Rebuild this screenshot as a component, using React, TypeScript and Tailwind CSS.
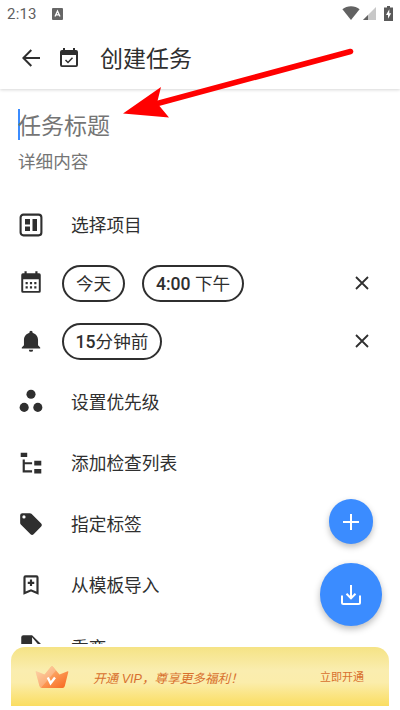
import type { ReactNode } from "react";

const Icon = ({
  children,
  className = "w-[26px] h-[26px]",
}: {
  children: ReactNode;
  className?: string;
}) => (
  <svg viewBox="0 0 24 24" fill="currentColor" className={`shrink-0 ${className}`}>
    {children}
  </svg>
);

const StatusBar = () => (
  <div className="flex items-center justify-between h-[28px] px-[7px] text-[#5f5f5f]">
    <div className="flex items-center gap-[15px]">
      <span className="pt-[1px] text-[15px] leading-none tracking-[0.2px]">2:13</span>
      <svg viewBox="0 0 11 12" className="w-[11px] h-[12px] mb-[1px]">
        <rect width="11" height="12" rx="1" fill="#666" />
        <path d="M3 8.5L5.5 3L8 8.5M4 6.8h3" fill="none" stroke="#fff" strokeWidth="1.3" />
      </svg>
    </div>
    <div className="flex items-center pb-[2px]">
      <svg viewBox="0 0 18 14" className="w-[18px] h-[14px]" fill="#626262">
        <path d="M9 14L0.4 3.2C5 -0.9 13 -0.9 17.6 3.2Z" />
      </svg>
      <svg viewBox="0 0 13 13" className="w-[13px] h-[13px] ml-[3px]">
        <path d="M13 0V13H0Z" fill="#c8c8c8" />
        <path d="M5 8V13H0Z" fill="#626262" />
      </svg>
      <svg viewBox="0 0 9 15" className="w-[9px] h-[15px] ml-[8px]">
        <path d="M3 0h3v1.5h3V15H0V1.5h3Z" fill="#5a5a5a" />
        <path d="M5.3 3.3L2 9h2v3.7L7.2 7.2H5.3Z" fill="#fff" />
      </svg>
    </div>
  </div>
);

const Row = ({
  icon,
  label,
  height = "h-[61px]",
  labelPad = "pt-[5px]",
}: {
  icon: ReactNode;
  label: string;
  height?: string;
  labelPad?: string;
}) => (
  <div className={`flex items-center shrink-0 ${height}`}>
    <div className="flex justify-center w-[26px] mr-[27px]">{icon}</div>
    <span className={`text-[17.7px] leading-none ${labelPad}`}>{label}</span>
  </div>
);

const Chip = ({ children, width }: { children: ReactNode; width: string }) => (
  <div
    className={`flex items-center justify-center h-[37px] pt-[3px] border-2 border-[#2f2f2f] rounded-full text-[17.6px] leading-none whitespace-pre ${width}`}
  >
    {children}
  </div>
);

const CloseIcon = () => (
  <svg viewBox="0 0 14 14" className="w-[14px] h-[14px] ml-auto mr-[13px]">
    <path d="M1 1L13 13M13 1L1 13" stroke="currentColor" strokeWidth="1.8" />
  </svg>
);

const VipBanner = () => (
  <div className="absolute left-[11px] top-[647px] w-[378px] h-[59px] flex items-center pl-[24px] pr-[25px] rounded-t-[14px] bg-[linear-gradient(to_bottom,#f5e385_0%,#faedaf_40%,#fbedab_60%,#fadd60_100%)] text-[#d8702e]">
    <svg viewBox="0 0 34 24" className="w-[34px] h-[24px]">
      <defs>
        <linearGradient id="crown" x1="0" y1="0" x2="1" y2="1">
          <stop offset="0" stopColor="#fbd09a" />
          <stop offset="0.55" stopColor="#fb9550" />
          <stop offset="1" stopColor="#f8641c" />
        </linearGradient>
      </defs>
      <path
        d="M1.3 6.2L9.5 9.5L16.2 1.5Q17 0.5 17.8 1.5L24.5 9.5L32.7 6.2Q33.5 6 33.3 7L29.8 21Q29.4 23 27.5 23H7Q5 23 4.5 21L0.7 7Q0.5 6 1.3 6.2Z"
        fill="url(#crown)"
      />
      <path d="M1.3 6.2L9.5 9.5L17 1L21 5.5L6 22.8Q5 22.5 4.5 21L0.7 7Z" fill="#fff" opacity="0.22" />
      <path d="M12.8 12.5L15.6 18.2L20 12.5" fill="none" stroke="#fff" strokeWidth="2.4" />
    </svg>
    <span className="ml-[24px] mt-[6px] text-[12.6px] leading-none italic whitespace-nowrap font-['Liberation_Sans','Noto_Sans_CJK_SC',sans-serif]">
      开通 VIP，尊享更多福利！
    </span>
    <span className="ml-auto mt-[1px] text-[11px] leading-none whitespace-nowrap">立即开通</span>
  </div>
);

const App = () => {
  return (
    <div className="relative flex flex-col w-[400px] h-[710px] overflow-hidden bg-white text-[#2f2f2f] font-['Roboto','Noto_Sans_CJK_SC',sans-serif]">
      <header className="h-[89px] shrink-0 shadow-[0_1px_3px_rgba(0,0,0,0.16)]">
        <StatusBar />
        <div className="flex items-center h-[60px] pl-[22px]">
          <svg viewBox="0 0 18 18" className="w-[18px] h-[18px]">
            <path d="M18 9H1.5M9.3 1L1.3 9L9.3 17" fill="none" stroke="currentColor" strokeWidth="2" />
          </svg>
          <svg viewBox="0 0 18 20" className="w-[18px] h-[20px] ml-[20px] mb-[1px]">
            <path
              d="M16 2h-1V0h-2v2H5V0H3v2H2a2 2 0 0 0-2 2v13a2 2 0 0 0 2 2h14a2 2 0 0 0 2-2V4a2 2 0 0 0-2-2Zm0 15.3H2V7h14Z"
              fill="currentColor"
            />
            <path d="M5.5 12L8 14.5L12.5 9.8" fill="none" stroke="currentColor" strokeWidth="1.5" />
          </svg>
          <h1 className="ml-[22px] pt-[3px] text-[23px] leading-none">创建任务</h1>
        </div>
      </header>

      <section className="h-[107px] shrink-0 pl-[18px] pt-[20px] text-[#757575]">
        <div className="flex items-center h-[31px] text-[23px] leading-none">
          <span className="w-[2px] h-[31px] -mr-[2px] bg-[#3b8cff]" />
          <span className="pt-[4px]">任务标题</span>
        </div>
        <p className="mt-[14px] text-[17.6px] leading-none">详细内容</p>
      </section>

      <main className="flex flex-col h-[448px] shrink-0 overflow-hidden px-[18px]">
        <Row
          height="h-[58px]"
          label="选择项目"
          labelPad="pt-[3px]"
          icon={
            <svg viewBox="0 0 24 24" className="w-[24px] h-[24px]">
              <rect x="1.6" y="1.6" width="20.8" height="20.8" rx="2.8" fill="none" stroke="currentColor" strokeWidth="2.1" />
              <path d="M6 6h5v5.5H6ZM6 13.5h5V18H6ZM13.5 6H18v12h-4.5Z" fill="currentColor" />
            </svg>
          }
        />
        <div className="flex items-center h-[58px] shrink-0">
          <Icon className="w-[26px] h-[26px] mb-[2px]">
            <path d="M19.5 4H18V2h-2v2H8V2H6v2H4.5A1.5 1.5 0 0 0 3 5.5v15A1.5 1.5 0 0 0 4.5 22h15a1.5 1.5 0 0 0 1.5-1.5v-15A1.5 1.5 0 0 0 19.5 4Zm-.3 16.3H4.8V9.5h14.4ZM7 12h2v2H7Zm4 0h2v2h-2Zm4 0h2v2h-2ZM7 16h2v2H7Zm4 0h2v2h-2Zm4 0h2v2h-2Z" />
          </Icon>
          <div className="flex gap-[17px] ml-[18px]">
            <Chip width="w-[63px]">今天</Chip>
            <Chip width="w-[102px]">
              <span className="font-medium">4:00</span> 下午
            </Chip>
          </div>
          <CloseIcon />
        </div>
        <div className="flex items-center h-[58px] shrink-0">
          <Icon>
            <path d="M12 22a2 2 0 0 0 2-2h-4a2 2 0 0 0 2 2Zm6.5-6v-5c0-3.07-2-5.64-5-6.32V4a1.5 1.5 0 0 0-3 0v.68C7.5 5.36 5.5 7.92 5.5 11v5L3.5 18v1h17v-1Z" />
          </Icon>
          <div className="ml-[18px]">
            <Chip width="w-[100px]">
              <span className="font-medium">15</span>分钟前
            </Chip>
          </div>
          <CloseIcon />
        </div>
        <Row
          height="h-[62px]"
          label="设置优先级"
          icon={
            <Icon>
              <circle cx="12" cy="5.8" r="4.2" />
              <circle cx="5.7" cy="17.9" r="4.2" />
              <circle cx="18.3" cy="17.9" r="4.2" />
            </Icon>
          }
        />
        <Row
          label="添加检查列表"
          icon={
            <Icon>
              <path d="M2.5 2.5H8.5v4H2.5ZM15 10h6.5v4.2H15ZM15 17.5h6.5v4.2H15ZM4.3 8.8h2v2.4H13v2H6.3v5.500H13v2H4.3Z" />
            </Icon>
          }
        />
        <Row
          label="指定标签"
          icon={
            <Icon>
              <path d="M21.41 11.58l-9-9A2 2 0 0 0 11 2H4a2 2 0 0 0-2 2v7c0 .55.22 1.05.59 1.42l9 9a2 2 0 0 0 2.82 0l7-7a2 2 0 0 0 0-2.84ZM5.5 7a1.5 1.5 0 1 1 0-3 1.5 1.5 0 0 1 0 3Z" />
            </Icon>
          }
        />
        <Row
          label="从模板导入"
          icon={
            <Icon>
              <path d="M17 3H7a2 2 0 0 0-2 2v16l7-3 7 3V5a2 2 0 0 0-2-2Zm0 15-5-2.18L7 18V5h10ZM11 7h2v2h2v2h-2v2h-2v-2H9V9h2Z" />
            </Icon>
          }
        />
        <Row
          height="h-[62px]"
          label="重变"
          labelPad="pt-[8px]"
          icon={
            <Icon>
              <path d="M5 2h8l8 8v10a2 2 0 0 1-2 2H5a2 2 0 0 1-2-2V4a2 2 0 0 1 2-2Zm8 2v7h6Z" />
            </Icon>
          }
        />
      </main>

      <button className="absolute left-[329px] top-[499px] flex items-center justify-center w-[44px] h-[45px] rounded-full bg-[#3b8cff] shadow-[0_3px_6px_rgba(0,0,0,0.25)]">
        <svg viewBox="0 0 16 16" className="w-[16px] h-[16px]">
          <path d="M8 0V16M0 8H16" stroke="#fff" strokeWidth="2" />
        </svg>
      </button>
      <button className="absolute left-[320px] top-[563px] flex items-center justify-center w-[62px] h-[63px] rounded-full bg-[#3b8cff] shadow-[0_3px_7px_rgba(0,0,0,0.27)]">
        <svg viewBox="0 0 20 20" className="w-[20px] h-[20px]" fill="none" stroke="#fff" strokeWidth="2">
          <path d="M10 0V13M5.5 8.8L10 13.3L14.5 8.8M1 10.5V17.5Q1 19 2.5 19H17.5Q19 19 19 17.5V10.5" />
        </svg>
      </button>

      <VipBanner />

      <svg viewBox="0 0 400 710" className="absolute inset-0 w-full h-full pointer-events-none">
        <path d="M350.5 51.5L150 105.5" stroke="#f00" strokeWidth="5.6" strokeLinecap="round" />
        <path d="M123 113.5L161 87L157 103L169 117.5Z" fill="#f00" />
      </svg>
    </div>
  );
};

export default App;
